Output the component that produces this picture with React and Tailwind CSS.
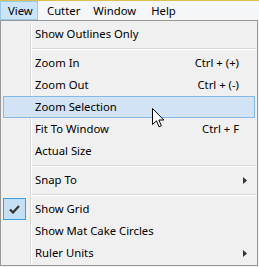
import React from "react";

const font = { fontFamily: '"Noto Sans", "Open Sans", sans-serif' };

function Item({ label, shortcut, arrow, checked }) {
  return (
    <div className="flex h-[22px] items-stretch">
      <div className="flex w-[30px] shrink-0 items-center border-r border-[#d7d7d7]">
        {checked && (
          <div className="ml-[2px] flex h-[22px] w-[23px] items-center justify-center border border-[#3c9ee0] bg-[#c4e0f2]">
            <svg width="11" height="9" viewBox="0 0 11 9">
              <path d="M1 4.5 L4 7.5 L10 1" stroke="#333" strokeWidth="2.2" fill="none" />
            </svg>
          </div>
        )}
      </div>
      <div className="flex flex-1 items-center border-l border-white pl-[3px] pr-[18px]">
        <span className="flex-1">{label}</span>
        {shortcut && <span>{shortcut}</span>}
        {arrow && (
          <svg className="mr-[-8px]" width="4" height="7" viewBox="0 0 4 7">
            <path d="M0 0 L4 3.5 L0 7 Z" fill="#333" />
          </svg>
        )}
      </div>
    </div>
  );
}

function Sep() {
  return (
    <div className="flex h-[7px] items-stretch">
      <div className="w-[30px] shrink-0 border-r border-[#d7d7d7]" />
      <div className="flex flex-1 flex-col border-l border-white pr-[1px] pt-[3px]">
        <div className="h-[1px] bg-[#d7d7d7]" />
        <div className="h-[1px] bg-white" />
      </div>
    </div>
  );
}

function Hover({ label }) {
  return (
    <div className="mx-[2px] flex h-[22px] items-center border border-[#84b8e8] bg-[#d1e3f5] pl-[31px]">
      {label}
    </div>
  );
}

export default function App() {
  return (
    <div className="relative h-[267px] w-[259px] bg-[#f0f0f0] text-[11.3px] leading-none text-black" style={font}>
      <div className="flex h-[20px] border-t border-[#dcc04f] bg-[#f5f6f7]">
        <div className="flex w-[38px] items-center border border-[#99c9ef] bg-[#cce4f7] pl-[7px]">View</div>
        <div className="flex items-center pl-[9px] pr-[6px]">Cutter</div>
        <div className="flex items-center px-[7px]">Window</div>
        <div className="flex items-center px-[8px]">Help</div>
      </div>
      <div className="w-[258px] border border-[#979797] bg-[#f0f0f0] pb-[1px] pt-[2px]">
        <Item label="Show Outlines Only" />
        <Sep />
        <Item label="Zoom In" shortcut="Ctrl + (+)" />
        <Item label="Zoom Out" shortcut="Ctrl + (-)" />
        <Hover label="Zoom Selection" />
        <Item label="Fit To Window" shortcut="Ctrl + F" />
        <Item label="Actual Size" />
        <Sep />
        <Item label="Snap To" arrow />
        <Sep />
        <Item label="Show Grid" checked />
        <Item label="Show Mat Cake Circles" />
        <Item label="Ruler Units" arrow />
      </div>
      <svg className="absolute left-[152px] top-[108px]" width="13" height="20" viewBox="0 0 13 20">
        <path d="M0.5 0.5 L0.5 16.5 L4.5 12.8 L7 18.8 L9.3 17.8 L6.9 12 L11.8 12 Z" fill="white" stroke="black" strokeWidth="1" strokeLinejoin="miter" />
      </svg>
    </div>
  );
}
